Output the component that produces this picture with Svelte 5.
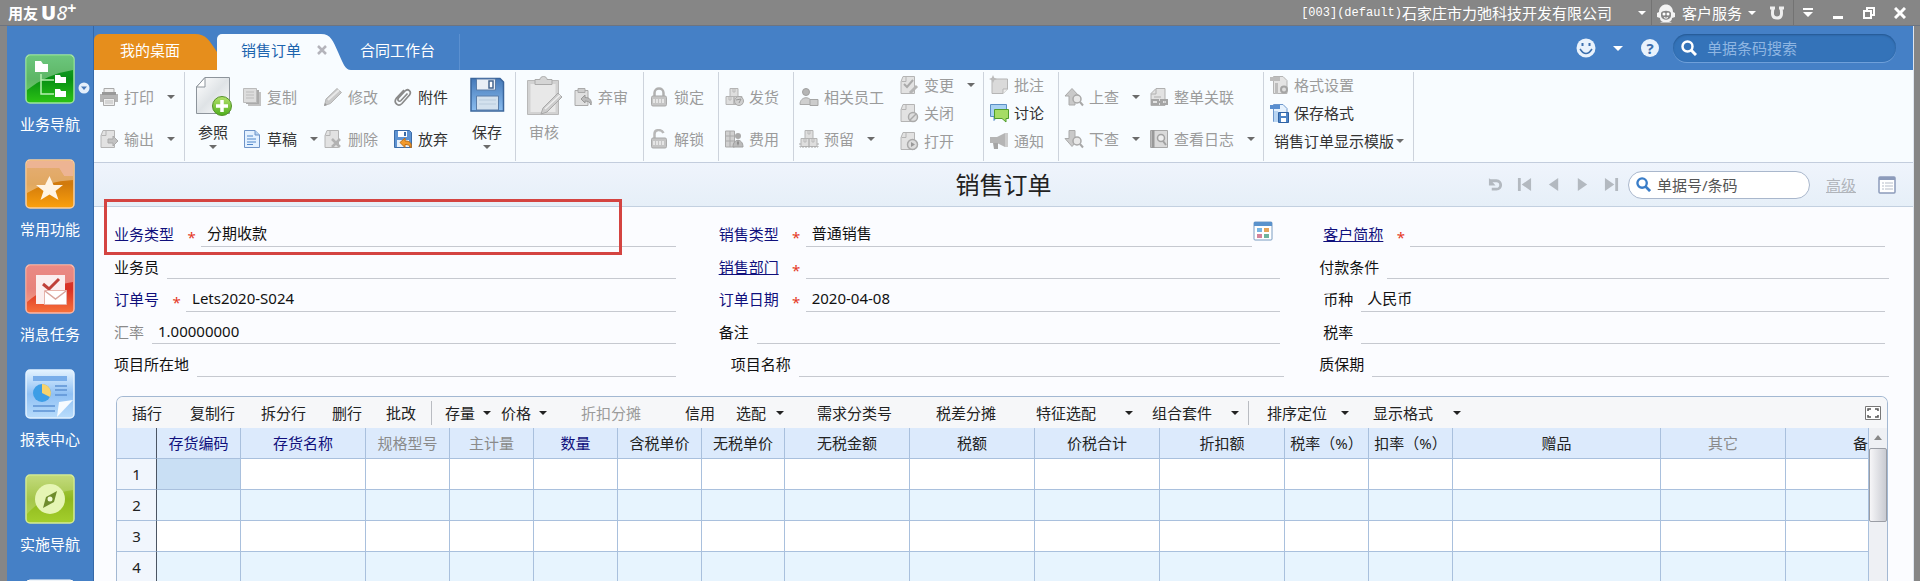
<script lang="ts">
  // small icons are drawn in a 20x20 box
  const doc = '<path d="M4 1.5H15.500V18.500H2V6.500Z" fill="#e2e2e2" stroke="#b4b4b4"/><path d="M7 1.500V6.500H2.500" fill="none" stroke="#b4b4b4"/>';
  const boxes = '<path d="M6 1.500h8v8H6zM2 9.500h8v8H2zM10 9.500h8v8h-8z" fill="#dedede" stroke="#b4b4b4"/><path d="M9 2v3h2V2M5 10v3h2v-3M13 10v3h2v-3" fill="none" stroke="#bbb"/>';
  const lockBody = '<rect x="2.500" y="9" width="15" height="10" rx="1.500" fill="#c4c4c4" stroke="#a9a9a9"/><path d="M5 12v4M8 12v4M11 12v4M14 12v4" stroke="#efefef" stroke-width="1.500"/>';

  const icons = {
    print: '<path d="M5 1.500h10V7H5z" fill="#eee" stroke="#aaa"/><path d="M1 7h18v8H1z" fill="#b5b5b5"/><path d="M3 5h14v3H3z" fill="#999"/><path d="M4.500 11.500h11v7h-11z" fill="#eee" stroke="#aaa"/><path d="M6 14h8M6 16h8" stroke="#bbb"/>',
    output: doc + '<path d="M9 10h5V7l5 5-5 5v-3H9z" fill="#c2c2c2" stroke="#aaa"/>',
    copy: '<path d="M6 5h13v14H6z" fill="#c2c2c2"/><path d="M4 3h13v14H4z" fill="#aaa"/><path d="M1.500 1.500h13v14h-13z" fill="#ddd" stroke="#bbb"/><path d="M4 5h8M4 8h8M4 11h8" stroke="#bdbdbd"/>',
    draft: '<path d="M2.500 1.500H13l4.500 4.500v12.500h-15z" fill="#e4f1ff" stroke="#6f94c8"/><path d="M13 1.500V6h4.500" fill="#b6d3f2" stroke="#6f94c8"/><path d="M5 7h6M5 10h9M5 13h9M5 15.500h6" stroke="#4f86c9"/>',
    edit: '<path d="M3 12 14 1.500 18.500 5.500 7.500 16.500 1.500 18.500Z" fill="#c9c9c9" stroke="#b5b5b5"/><path d="m5 13 11-10" stroke="#e8e8e8" stroke-width="2"/><path d="m1 19 3-1-2-2z" fill="#999"/>',
    remove: doc + '<path d="m9 10 8 8M17 10l-8 8" stroke="#b2b2b2" stroke-width="2.500"/>',
    clip: '<path d="M14.500 6.500 8 13.500c-2 2-4-.5-2.500-2.500L12 4c3-3 7 .5 4.500 4L9 16.500c-4 4-9-1-5.500-5.500L11 3" fill="none" stroke="#8a8a8a" stroke-width="1.700"/>',
    discard: '<path d="M1.500 1.500h15l2 2v15h-17z" fill="#5e93d2" stroke="#3b6ca8"/><path d="M5 2h9v6H5z" fill="#fff"/><path d="M11 3h2v4h-2z" fill="#3b6ca8"/><path d="M4 11h12v7H4z" fill="#e8f1fa"/><path d="M7 13.500 12 9v3c5 0 7 2 6 7-1.500-3-3-3.500-6-3.500v3z" fill="#f29a2c" stroke="#c06d10"/>',
    unaudit: '<path d="M2 3.500h13v15H2z" fill="#e0e0e0" stroke="#aaa"/><path d="M5 1.500h7v4H5z" fill="#ccc" stroke="#aaa"/><path d="m8 12 4-4v2.500c5 0 7 3 6 7.500-1-3-3-4-6-4V16z" fill="#bbb" stroke="#999"/>',
    lock: '<path d="M5.500 9V6c0-6 9-6 9 0v3" fill="none" stroke="#b0b0b0" stroke-width="2.500"/>' + lockBody,
    unlock: '<path d="M5.500 9V5c0-5 7-5 9-1" fill="none" stroke="#b8b8b8" stroke-width="2.500"/>' + lockBody,
    ship: boxes + '<circle cx="15" cy="14" r="4.500" fill="#d0d0d0" stroke="#a8a8a8"/><path d="m12 13 5-1-2 4" fill="none" stroke="#999"/>',
    fee: '<path d="M1.500 2h9v16h-9z" fill="#d0d0d0" stroke="#aaa"/><path d="M1 7h10M1 12h10M6 2v16" stroke="#aaa"/><circle cx="14" cy="7" r="3" fill="#aaa"/><path d="M9 18c0-9 10-9 10 0z" fill="#bbb" stroke="#a0a0a0"/><path d="m14 11-1 3 1 3 1-3z" fill="#888"/>',
    staff: '<circle cx="7" cy="5" r="3.500" fill="#b5b5b5" stroke="#a0a0a0"/><path d="M1 17.500c0-9 12-9 12 0z" fill="#cfcfcf" stroke="#aaa"/><path d="M11 12.500h8v6h-8z" fill="#ccc" stroke="#a5a5a5"/>',
    reserve: boxes + '<path d="M1 14v4h18v-4" fill="none" stroke="#aaa" stroke-dasharray="2 1"/>',
    change: doc + '<path d="m5 9 3 3 6-7" fill="none" stroke="#aaa" stroke-width="2"/><path d="m11 18 7-7" stroke="#b5b5b5" stroke-width="3"/>',
    close: doc + '<circle cx="14" cy="14" r="4.500" fill="#ddd" stroke="#aaa" stroke-width="1.500"/><path d="m11 17 6-6" stroke="#aaa" stroke-width="1.500"/>',
    open: doc + '<circle cx="13.500" cy="13.500" r="5" fill="#ddd" stroke="#aaa" stroke-width="1.500"/><path d="m12 11 4 2.500-4 2.500z" fill="#999"/>',
    note: '<path d="M3 4h15.500v10l-4.500 4.500H3z" fill="#dadada" stroke="#b5b5b5"/><path d="M18.500 14H14v4.500" fill="#eee" stroke="#b5b5b5"/><path d="m4 0 1.200 2.800L8 4 5.200 5.200 4 8 2.800 5.200 0 4l2.800-1.200z" fill="#bbb"/>',
    discuss: '<path d="M1.500 1.500h16v12H8l-3 4v-4H1.500z" fill="#a9d2f3" stroke="#5b8fc4"/><path d="M5.500 6.500h14v9H17v3.500l-4-3.500H5.500z" fill="#a6dc66" stroke="#4f9c2c"/>',
    notify: '<path d="M1 6h7l8-4v14l-8-4H1z" fill="#b5b5b5"/><path d="M4 12h5v6H5z" fill="#a5a5a5"/><path d="M17.500 2v14" stroke="#ccc" stroke-width="3"/>',
    up: '<path d="M8 1.500 15 9h-4v9H5V9H1z" fill="#c9c9c9" stroke="#aaa"/><circle cx="13" cy="12" r="4" fill="#e8e8e8" stroke="#a8a8a8" stroke-width="1.500"/><path d="m16 15 3 3.500" stroke="#a8a8a8" stroke-width="2"/>',
    down: '<path d="M5 1.500h6v8h4l-7 8-7-8h4z" fill="#c9c9c9" stroke="#aaa"/><circle cx="13" cy="12" r="4" fill="#e8e8e8" stroke="#a8a8a8" stroke-width="1.500"/><path d="m16 15 3 3.500" stroke="#a8a8a8" stroke-width="2"/>',
    relate: '<path d="M7 1.500h9v17H2V6.500z" fill="#e2e2e2" stroke="#b0b0b0"/><path d="M7 2v5H2M5 10h7" fill="none" stroke="#b0b0b0"/><path d="M3 13h6v4H3zM12 13h6v4h-6zM8 15h6" fill="none" stroke="#a5a5a5" stroke-width="2"/>',
    log: '<path d="M1.500 1.500h17v17h-17z" fill="#dadada" stroke="#a8a8a8"/><path d="M4 1v18" stroke="#999" stroke-width="3"/><circle cx="12" cy="9" r="3.500" fill="#eee" stroke="#a2a2a2" stroke-width="1.500"/><path d="m14 12 3 4" stroke="#a2a2a2" stroke-width="2"/>',
    format: '<path d="M4.500 1.500H14l4 4v13H4.500z" fill="#e4e4e4" stroke="#b4b4b4"/><path d="M1 2h10v4H1zM6 8h3v11H6z" fill="#bdbdbd"/><circle cx="15" cy="14.500" r="3" fill="#ddd" stroke="#a5a5a5" stroke-width="2"/>',
    saveFormat: '<path d="M4.500 1.500H14l4 4v13H4.500z" fill="#e5f1fd" stroke="#6c97cc"/><path d="M1 2h10v4H1z" fill="#5a8fd0"/><path d="M5 8h4v11H5z" fill="#b9d5f2"/><path d="M9.500 9.500h10v10h-10z" fill="#4d84c6" stroke="#2f62a3"/><path d="M12 10h5v3h-5zM12 15h5v4h-5z" fill="#fff"/>',
    // large ones use 40x40
    refer: '<path d="M12 1.500h24.500v36h-33V11z" fill="url(#paper)" stroke="#8d949b"/><path d="M12 1.500V11H3.500z" fill="#fff" stroke="#8d949b"/><circle cx="29" cy="30" r="9.500" fill="url(#green)" stroke="#55922a"/><path d="M29 24v12M23 30h12" stroke="#fff" stroke-width="3.500"/>',
    save: '<path d="M4 2.500h29l3.500 3.500v29H4z" fill="url(#disk)" stroke="#3a659c" stroke-width="1.500"/><path d="M9.500 3h19v11h-19z" fill="#e9eff6" stroke="#5a7da8"/><path d="M22 5h4v7h-4z" fill="#fff" stroke="#44658f" stroke-width="1.500"/><path d="M9.500 20h22v14h-22z" fill="#d3e1ee" stroke="#5a7da8"/><path d="M12 24h17M12 28h17" stroke="#b9cbdc"/>',
    audit: '<path d="M3.500 4.500h31v34h-31z" fill="#d2d2d2" stroke="#b8b8b8"/><path d="M6.500 8h25v28h-25z" fill="#e8e8e8"/><path d="M11 3.500h5c0-4 7-4 7 0h5v5H11z" fill="#d5d5d5" stroke="#aaa"/><path d="m19 32 15-15 4 4-15 15-6 2z" fill="#ccc" stroke="#a8a8a8"/><path d="m21 33 15-14" stroke="#eee" stroke-width="1.500"/>',
  };

  const ribbon = [
    [{ width: 85, items: [{ icon: "print", text: "打印", caret: true }, { icon: "output", text: "输出", caret: true }] }],
    [
      { width: 52, big: true, items: [{ icon: "refer", text: "参照", on: true, caret: true }] },
      { width: 81, items: [{ icon: "copy", text: "复制" }, { icon: "draft", text: "草稿", on: true, caret: true }] },
      { width: 70, items: [{ icon: "edit", text: "修改" }, { icon: "remove", text: "删除" }] },
      { width: 71, items: [{ icon: "clip", text: "附件", on: true }, { icon: "discard", text: "放弃", on: true }] },
      { width: 51, big: true, items: [{ icon: "save", text: "保存", on: true, caret: true }] },
    ],
    [
      { width: 52, big: true, items: [{ icon: "audit", text: "审核" }] },
      { width: 70, items: [{ icon: "unaudit", text: "弃审" }] },
    ],
    [{ width: 69, items: [{ icon: "lock", text: "锁定" }, { icon: "unlock", text: "解锁" }] }],
    [{ width: 69, items: [{ icon: "ship", text: "发货" }, { icon: "fee", text: "费用" }] }],
    [
      { width: 100, items: [{ icon: "staff", text: "相关员工" }, { icon: "reserve", text: "预留", caret: true }] },
      { width: 84, tight: true, items: [{ icon: "change", text: "变更", caret: true }, { icon: "close", text: "关闭" }, { icon: "open", text: "打开" }] },
    ],
    [{ width: 69, tight: true, items: [{ icon: "note", text: "批注" }, { icon: "discuss", text: "讨论", on: true }, { icon: "notify", text: "通知" }] }],
    [
      { width: 85, items: [{ icon: "up", text: "上查", caret: true }, { icon: "down", text: "下查", caret: true }] },
      { width: 114, items: [{ icon: "relate", text: "整单关联" }, { icon: "log", text: "查看日志", caret: true }] },
    ],
    [{ width: 144, tight: true, items: [{ icon: "format", text: "格式设置" }, { icon: "saveFormat", text: "保存格式", on: true }, { text: "销售订单显示模版", on: true, caret: true }] }],
  ];

  const modules = ["业务导航", "常用功能", "消息任务", "报表中心", "实施导航", ""];

  const fields = [
    { id: "bizType", label: "业务类型", value: "分期收款", key: true, required: true, marked: true },
    { id: "saleType", label: "销售类型", value: "普通销售", key: true, required: true, picker: true },
    { id: "customer", label: "客户简称", value: "", key: true, link: true, required: true },
    { id: "clerk", label: "业务员", value: "" },
    { id: "dept", label: "销售部门", value: "", key: true, link: true, required: true },
    { id: "terms", label: "付款条件", value: "", outset: true },
    { id: "orderNo", label: "订单号", value: "Lets2020-S024", key: true, required: true },
    { id: "orderDate", label: "订单日期", value: "2020-04-08", key: true, required: true },
    { id: "currency", label: "币种", value: "人民币" },
    { id: "rate", label: "汇率", value: "1.00000000", muted: true },
    { id: "memo", label: "备注", value: "" },
    { id: "tax", label: "税率", value: "" },
    { id: "site", label: "项目所在地", value: "" },
    { id: "project", label: "项目名称", value: "", indent: true },
    { id: "warranty", label: "质保期", value: "", outset: true },
  ];

  const commands = [
    { text: "插行", width: 58 },
    { text: "复制行", width: 71 },
    { text: "拆分行", width: 71 },
    { text: "删行", width: 54 },
    { text: "批改", width: 45 },
    { divider: true },
    { text: "存量", width: 56, gap: 8 },
    { text: "价格", width: 80, gap: 8 },
    { text: "折扣分摊", width: 104, off: true },
    { text: "信用", width: 51 },
    { text: "选配", width: 81, gap: 10 },
    { text: "需求分类号", width: 119 },
    { text: "税差分摊", width: 100 },
    { text: "特征选配", width: 116, gap: 29 },
    { text: "组合套件", width: 96, gap: 19 },
    { divider: true, wide: true },
    { text: "排序定位", width: 106, gap: 14 },
    { text: "显示格式", width: 90, gap: 20 },
  ];

  const columns = [
    { text: "存货编码", width: 84, key: true },
    { text: "存货名称", width: 125, key: true },
    { text: "规格型号", width: 84, muted: true },
    { text: "主计量", width: 84, muted: true },
    { text: "数量", width: 84, key: true },
    { text: "含税单价", width: 84 },
    { text: "无税单价", width: 83 },
    { text: "无税金额", width: 125 },
    { text: "税额", width: 125 },
    { text: "价税合计", width: 125 },
    { text: "折扣额", width: 125 },
    { text: "税率（%）", width: 84 },
    { text: "扣率（%）", width: 84 },
    { text: "赠品", width: 208 },
    { text: "其它", width: 125, muted: true },
  ];
  const rows = [1, 2, 3, 4];
</script>

{#snippet magnifier()}
  <svg class="magnifier" viewBox="0 0 16 16" aria-hidden="true">
    <circle cx="6.500" cy="6.500" r="5" fill="none" stroke="currentColor" stroke-width="2.500" />
    <path d="m10 10 5 5" stroke="currentColor" stroke-width="3" />
  </svg>
{/snippet}

<svg class="defs" aria-hidden="true">
  <defs>
    <linearGradient id="paper" x1="0" y1="0" x2="1" y2="1">
      <stop offset="0" stop-color="#fff" /><stop offset=".5" stop-color="#dfe3e6" /><stop offset="1" stop-color="#fff" />
    </linearGradient>
    <linearGradient id="green" x2="0" y2="1">
      <stop stop-color="#b4e26c" /><stop offset="1" stop-color="#4fae1d" />
    </linearGradient>
    <linearGradient id="disk" x2="0" y2="1">
      <stop stop-color="#4579b8" /><stop offset="1" stop-color="#8abdf0" />
    </linearGradient>
    <linearGradient id="nav" x2="0" y2="1">
      <stop stop-color="#1ea838" /><stop offset=".5" stop-color="#078f14" /><stop offset="1" stop-color="#2cc414" />
    </linearGradient>
    <linearGradient id="fav" x2="0" y2="1">
      <stop stop-color="#d9822c" /><stop offset=".5" stop-color="#d17a0c" /><stop offset="1" stop-color="#fba00c" />
    </linearGradient>
    <linearGradient id="msg" x2="0" y2="1">
      <stop stop-color="#dc3c34" /><stop offset=".5" stop-color="#d83024" /><stop offset="1" stop-color="#f8723a" />
    </linearGradient>
    <linearGradient id="report" x2="0" y2="1">
      <stop stop-color="#e4f3ff" /><stop offset=".5" stop-color="#8fc0f4" /><stop offset="1" stop-color="#b8dcfb" />
    </linearGradient>
    <linearGradient id="guide" x2="0" y2="1">
      <stop stop-color="#b4d25c" /><stop offset=".5" stop-color="#8fb81e" /><stop offset="1" stop-color="#a4cf2c" />
    </linearGradient>
  </defs>
</svg>

<div class="desktop">
  <header class="titlebar">
    <div class="brand">用友<b>U</b><i>8</i><sup>+</sup></div>
    <div class="account">
      <span class="mono">[003](default)</span>石家庄市力弛科技开发有限公司
    </div>
    <button class="bar-btn account-menu" aria-label="账套"><span class="caret"></span></button>
    <button class="bar-btn service">
      <svg width="20" height="20" viewBox="0 0 20 20" aria-hidden="true">
        <path d="M3 9C3-1 17-1 17 9l2 1v4l-3 1c0 4-3 3-3 3l3 1.500H4L7 18s-3 1-3-3l-3-1v-4z" fill="#f4f4f4" />
        <path d="M5 10c1-3 9-3 10 0v3c-1 5-9 5-10 0z" fill="#888" />
        <circle cx="8" cy="11" r="1.500" fill="#fff" /><circle cx="12" cy="11" r="1.500" fill="#fff" />
        <path d="M8 14.500q2 1.500 4 0" stroke="#fff" fill="none" />
      </svg>
      客户服务<span class="caret"></span>
    </button>
    <button class="bar-btn u-btn" aria-label="U">
      <svg width="16" height="14" viewBox="0 0 16 14"><path d="M1 2h5M10 2h5M4 2c-1 6-1 10 4 10s5-4 4-10" fill="none" stroke="#eee" stroke-width="3" /></svg>
    </button>
    <button class="bar-btn more" aria-label="菜单">
      <svg width="10" height="10" viewBox="0 0 10 10"><path d="M0 0h10v2H0zM0 4h10L5 9z" fill="#fff" /></svg>
    </button>
    <button class="bar-btn win" aria-label="最小化">
      <svg width="12" height="12" viewBox="0 0 12 12"><path d="M1 9h10v3H1z" fill="#fff" /></svg>
    </button>
    <button class="bar-btn win" aria-label="还原">
      <svg width="12" height="12" viewBox="0 0 12 12"><path d="M4 3V1h7v7H9M1 4h7v7H1z" fill="none" stroke="#fff" stroke-width="2" /></svg>
    </button>
    <button class="bar-btn win" aria-label="关闭">
      <svg width="12" height="12" viewBox="0 0 12 12"><path d="m1 1 10 10M11 1 1 11" stroke="#fff" stroke-width="3" /></svg>
    </button>
  </header>

  <div class="window">
    <nav class="sidebar">
      {#each modules as name, i}
        <button class="module" aria-label={name || "更多"}>
          <svg width="50" height="50" viewBox="0 0 50 50" aria-hidden="true">
            {#if i === 0}
              <rect x="1" y="1" width="48" height="48" rx="4" fill="url(#nav)" stroke="#9fe39f" stroke-width="1.500" />
              <path d="M2 2h46v14Q22 20 2 36z" fill="#fff" opacity=".35" />
              <path d="M10 7h6l2 3h5v8H10zM30 21h5l1 2h5v6H30zM30 35h5l1 2h5v6H30z" fill="#fff" />
              <path d="M16 20v20h13M16 26h13" fill="none" stroke="#b7efb0" stroke-width="1.500" />
            {:else if i === 1}
              <rect x="1" y="1" width="48" height="48" rx="4" fill="url(#fav)" stroke="#f9cfa0" stroke-width="1.500" />
              <path d="M2 2h46v15H39l-5-8H2z" fill="#edb493" />
              <path d="M2 9h32l5 8h9v4Q22 22 2 34z" fill="#fff" opacity=".35" />
              <path d="m24.500 17 4 9H38l-7.500 6 3 9-9-5.500-9 5.500 3-9-7.500-6h9z" fill="#fff4e4" />
            {:else if i === 2}
              <rect x="1" y="1" width="48" height="48" rx="4" fill="url(#msg)" stroke="#fbb7a6" stroke-width="1.500" />
              <path d="M2 2h46v16Q20 22 2 38z" fill="#fff" opacity=".4" />
              <path d="M11 11h29v29H11z" fill="#fbeeee" />
              <path d="m18 20 6 5 10-10" fill="none" stroke="#bf4038" stroke-width="3" />
              <path d="M19.500 26.500h22v14h-22z" fill="#fff" stroke="#e7b4ab" />
              <path d="m20 27 10.500 8L41 27" fill="none" stroke="#d9a49c" stroke-width="1.500" />
            {:else if i === 3}
              <rect x="1" y="1" width="48" height="48" rx="4" fill="url(#report)" stroke="#e3f2ff" stroke-width="1.500" />
              <path d="M8 7h34v5H8z" fill="#79aeea" />
              <circle cx="17" cy="24" r="9" fill="#3d9ee6" />
              <path d="M17 24V15a9 9 0 0 1 8 13z" fill="#f8d36c" />
              <path d="M30 17h12M30 21h12M30 26h12M8 37h22M8 42h22" stroke="#5d92d4" stroke-width="1.500" />
              <path d="m32 48 2-15 14-2z" fill="#f6fbff" />
            {:else if i === 4}
              <rect x="1" y="1" width="48" height="48" rx="4" fill="url(#guide)" stroke="#d5eb95" stroke-width="1.500" />
              <path d="M2 2h46v14Q20 20 2 40z" fill="#fff" opacity=".2" />
              <circle cx="25" cy="25" r="15" fill="#e6f5b4" />
              <path d="m32 17-3 11-11 6 3-11z" fill="#6f8c2c" />
              <circle cx="25" cy="25" r="2.500" fill="#f2fbd6" />
            {:else}
              <rect x="1" y="1" width="48" height="48" rx="4" fill="#dfe8f2" stroke="#fff" />
            {/if}
          </svg>
          <span>{name}</span>
          {#if i === 0}
            <svg class="expand" viewBox="0 0 12 12" aria-hidden="true">
              <circle cx="6" cy="6" r="5.500" fill="#e4effb" /><path d="M3 4.500h6L6 8z" fill="#4678b8" />
            </svg>
          {/if}
        </button>
      {/each}
    </nav>

    <main>
      <div class="tabs">
        <button class="tab home">我的桌面</button>
        <svg class="home-edge" viewBox="0 0 22 36" aria-hidden="true"><path d="M0 0C11 0 14 6 22 18V36H0Z" /></svg>
        <div class="tab current">
          <button>销售订单</button>
          <button class="tab-close" aria-label="关闭标签">
            <svg width="10" height="10" viewBox="0 0 10 10"><path d="m1 1 8 8M9 1 1 9" stroke="#b4b4bb" stroke-width="2.500" /></svg>
          </button>
        </div>
        <svg class="current-edge" viewBox="0 0 30 36" aria-hidden="true"><path d="M0 0C10 0 12 7 17 18S24 36 30 36H0Z" /></svg>
        <button class="tab plain">合同工作台</button>
        <div class="tools">
          <button class="tool" aria-label="表情">
            <svg width="20" height="20" viewBox="0 0 20 20">
              <circle cx="10" cy="10" r="9.500" fill="#e9f2fc" />
              <path d="M6.500 5v3M13.500 5v3" stroke="#3c6fad" stroke-width="2" />
              <path d="M4 11q6 9 12 0" fill="none" stroke="#3c6fad" stroke-width="1.500" />
            </svg>
          </button>
          <button class="tool mood" aria-label="更多"><span class="caret wide"></span></button>
          <button class="tool help" aria-label="帮助">?</button>
          <label class="top-search">
            {@render magnifier()}
            <input type="text" placeholder="单据条码搜索" aria-label="单据条码搜索" />
          </label>
        </div>
      </div>

      <div class="ribbon">
        {#each ribbon as group}
          <div class="group">
            {#each group as col}
              <div class="col" class:big={col.big} class:tight={col.tight} style="width: {col.width}px">
                {#each col.items as item}
                  <button class="action" class:on={item.on} class:bare={!item.icon}>
                    {#if item.icon}
                      <svg viewBox={col.big ? "0 0 40 40" : "0 0 20 20"} aria-hidden="true">{@html icons[item.icon]}</svg>
                    {/if}
                    <span>{item.text}</span>
                    {#if item.caret}<span class="caret"></span>{/if}
                  </button>
                {/each}
              </div>
            {/each}
          </div>
        {/each}
      </div>

      <div class="heading">
        <h1>销售订单</h1>
        <div class="pager">
          <button aria-label="刷新"><svg viewBox="0 0 16 16"><path d="M2 4h7c6 0 6 9 0 9H4" fill="none" stroke="currentColor" stroke-width="3" /><path d="M1 1v8h7z" fill="currentColor" /></svg></button>
          <button aria-label="首张"><svg viewBox="0 0 16 16"><path d="M1 1h3v14H1zM15 1v14L5 8z" fill="currentColor" /></svg></button>
          <button aria-label="上张"><svg viewBox="0 0 16 16"><path d="M13 1v14L3 8z" fill="currentColor" /></svg></button>
          <button aria-label="下张"><svg viewBox="0 0 16 16"><path d="M3 1v14l10-7z" fill="currentColor" /></svg></button>
          <button aria-label="末张"><svg viewBox="0 0 16 16"><path d="M12 1h3v14h-3zM1 1v14l10-7z" fill="currentColor" /></svg></button>
          <label class="doc-search">
            {@render magnifier()}
            <input type="text" placeholder="单据号/条码" aria-label="单据号/条码" />
          </label>
          <a href="#advanced">高级</a>
          <button class="layout" aria-label="布局">
            <svg viewBox="0 0 18 18"><rect x="1" y="1" width="16" height="16" rx="1" fill="#fff" stroke="#8c9bbb" stroke-width="1.500" /><path d="M1 2.500h16" stroke="#8c9bbb" stroke-width="3" /><path d="M4 7h2M4 10h2M4 13h2M7 7h8M7 10h8M7 13h8" stroke="#b6bdc9" /></svg>
          </button>
        </div>
      </div>

      <form class="form">
        {#each fields as field}
          <div class="field" class:outset={field.outset} class:indent={field.indent}>
            <label for={field.id} class:key={field.key} class:link={field.link} class:muted={field.muted}>{field.label}</label>
            {#if field.required}<span class="star">*</span>{/if}
            <input id={field.id} type="text" value={field.value} />
            {#if field.picker}
              <button type="button" class="picker" aria-label="参照">
                <svg width="20" height="20" viewBox="0 0 20 20">
                  <rect x="1" y="1" width="18" height="18" rx="1" fill="#fff" stroke="#7b9cc2" />
                  <path d="M1 1h18v4H1z" fill="#5a92cc" />
                  <path d="M4 7h5v4H4z" fill="#78b6e4" /><path d="M11 7h5v4h-5z" fill="#e5a55b" />
                  <path d="M4 13h5v4H4z" fill="#d4839b" /><path d="M11 13h5v4h-5z" fill="#6fb49c" />
                </svg>
              </button>
            {/if}
            {#if field.marked}<div class="mark"></div>{/if}
          </div>
        {/each}
      </form>

      <section class="detail">
        <div class="commands">
          {#each commands as cmd}
            {#if cmd.divider}
              <span class="divider" class:wide={cmd.wide}></span>
            {:else}
              <button class:off={cmd.off} style="width: {cmd.width}px">
                {cmd.text}{#if cmd.gap}<span class="caret" style="margin-left: {cmd.gap}px"></span>{/if}
              </button>
            {/if}
          {/each}
          <button class="fullscreen" aria-label="全屏">
            <svg width="16" height="14" viewBox="0 0 16 14"><path d="M.5.500h15v13H.5z" fill="#fff" stroke="#777" /><path d="M3 5V3h3M10 3h3v2M3 9v2h3M10 11h3V9" fill="none" stroke="#555" stroke-width="1.500" /></svg>
          </button>
        </div>
        <div class="sheet">
          <table>
            <colgroup>
              <col style="width: 40px" />
              {#each columns as column}<col style="width: {column.width}px" />{/each}
              <col />
            </colgroup>
            <thead>
              <tr>
                <th></th>
                {#each columns as column}
                  <th class:key={column.key} class:muted={column.muted}>{column.text}</th>
                {/each}
                <th class="last">备</th>
              </tr>
            </thead>
            <tbody>
              {#each rows as row}
                <tr>
                  <th>{row}</th>
                  {#each columns as _, c}<td class:selected={row === 1 && c === 0}></td>{/each}
                  <td></td>
                </tr>
              {/each}
            </tbody>
          </table>
          <div class="scroll">
            <svg width="8" height="5" viewBox="0 0 8 5" aria-hidden="true"><path d="M0 5h8L4 0z" fill="#888" /></svg>
            <div class="thumb"></div>
          </div>
        </div>
      </section>
    </main>
  </div>
</div>

<style>
  :global(body) {
    background: #868686;
    overflow: hidden;
  }

  .desktop {
    height: 100vh;
    display: flex;
    flex-direction: column;
    font-family: "Noto Sans", "Noto Sans CJK SC", sans-serif;
    font-size: 15px;
    line-height: 20px;
    color: #222;
  }

  .defs {
    position: absolute;
    width: 0;
    height: 0;
  }

  button {
    font: inherit;
    color: inherit;
    background: none;
    border: 0;
    padding: 0;
    white-space: nowrap;
    cursor: pointer;
  }

  input {
    font: inherit;
    color: inherit;
    background: none;
    border: 0;
    outline: 0;
    padding: 0;
    min-width: 0;
  }

  svg {
    display: block;
    flex: none;
  }

  .caret {
    flex: none;
    width: 0;
    border: 4px solid transparent;
    border-top: 4px solid currentColor;
    border-bottom: 0;
  }

  .caret.wide {
    border-width: 5px 5px 0;
  }

  /* title bar */
  .titlebar {
    flex: none;
    display: flex;
    align-items: center;
    height: 26px;
    padding: 0 5px 0 8px;
    box-sizing: border-box;
    color: #fff;
    border-bottom: 1px solid #6d7480;
  }

  .brand {
    display: flex;
    align-items: center;
    font-weight: bold;
    flex: 1;
  }

  .brand b {
    margin-left: 3px;
    font-size: 20px;
    font-weight: 900;
  }

  .brand i {
    font-size: 20px;
    font-weight: normal;
  }

  .brand sup {
    font-size: 16px;
    line-height: 10px;
    padding-bottom: 10px;
  }

  .account {
    display: flex;
    align-items: center;
  }

  .mono {
    font-family: "Liberation Mono", monospace;
    font-size: 12px;
  }

  .bar-btn {
    display: flex;
    align-items: center;
    justify-content: center;
    height: 25px;
  }

  .account-menu {
    width: 40px;
    padding-left: 20px;
    border-right: 1px solid #737373;
  }

  .service {
    width: 108px;
    gap: 6px;
  }

  .u-btn {
    width: 34px;
    border-right: 1px solid #737373;
  }

  .more {
    width: 28px;
  }

  .win {
    width: 31px;
  }

  .window {
    flex: 1;
    min-height: 0;
    display: flex;
    margin: 0 6px 0 7px;
    border-right: 1px solid #dfe6f0;
  }

  /* module bar */
  .sidebar {
    flex: none;
    width: 87px;
    padding-top: 28px;
    box-sizing: border-box;
    background: #4580c6;
    border-right: 1px solid #3568a8;
    overflow: hidden;
  }

  .module {
    position: relative;
    display: flex;
    flex-direction: column;
    align-items: center;
    gap: 10px;
    width: 100%;
    height: 105px;
    color: #fff;
  }

  .expand {
    position: absolute;
    right: 3px;
    top: 28px;
    width: 12px;
    height: 12px;
  }

  main {
    flex: 1;
    min-width: 0;
    display: flex;
    flex-direction: column;
    background: #fbfcff;
  }

  /* tabs */
  .tabs {
    flex: none;
    display: flex;
    height: 36px;
    padding-top: 8px;
    background: #4580c6;
    color: #fff;
  }

  .tab {
    height: 36px;
    padding-bottom: 4px;
    box-sizing: border-box;
  }

  .home {
    width: 101px;
    padding-left: 26px;
    text-align: left;
    background: #e68e1c;
    border-radius: 6px 0 0 0;
  }

  .home-edge {
    width: 22px;
    height: 36px;
    fill: #e68e1c;
  }

  .current {
    display: flex;
    align-items: center;
    gap: 16px;
    width: 104px;
    padding-left: 24px;
    background: #f8fcff;
    color: #1d64ae;
    border-radius: 5px 0 0 0;
    z-index: 1;
  }

  .current button {
    flex: none;
  }

  .current-edge {
    width: 30px;
    height: 36px;
    fill: #f8fcff;
  }

  .plain {
    padding-left: 9px;
    padding-right: 24px;
    border-right: 1px solid #5b90d0;
  }

  .tools {
    flex: 1;
    display: flex;
    align-items: center;
    justify-content: flex-end;
    height: 28px;
    padding-right: 17px;
  }

  .mood {
    display: flex;
    padding: 8px 14px 8px 17px;
  }

  .help {
    width: 18px;
    height: 18px;
    border-radius: 50%;
    background: #e9f2fc;
    color: #3c6fad;
    font-weight: bold;
    line-height: 18px;
    margin: 0 14px 0 4px;
  }

  .magnifier {
    width: 16px;
    height: 16px;
  }

  .top-search {
    display: flex;
    align-items: center;
    gap: 10px;
    width: 223px;
    height: 28px;
    padding: 0 8px;
    box-sizing: border-box;
    border-radius: 14px;
    background: #3473b9;
    box-shadow: inset 0 1px 2px #24568f, 0 1px 0 #6fa0da;
  }

  .top-search input {
    flex: 1;
  }

  .top-search input::placeholder {
    color: #8fb6e2;
    opacity: 1;
  }

  /* ribbon */
  .ribbon {
    flex: none;
    display: flex;
    height: 92px;
    background: #f8fcff;
    border-bottom: 1px solid #c3cddd;
  }

  .group {
    display: flex;
    padding-left: 5px;
    margin: 2px 0 1px;
    border-right: 1px solid #cdd3dc;
  }

  .col {
    padding-top: 4px;
  }

  .col.tight {
    padding-top: 0;
    margin-top: -1px;
  }

  .action {
    display: flex;
    align-items: center;
    gap: 5px;
    height: 42px;
    color: #9b9b9b;
  }

  .action.on {
    color: #333;
  }

  .action svg {
    width: 20px;
    height: 20px;
  }

  .action .caret {
    margin-left: 8px;
    color: #6b6b6b;
  }

  .tight .action {
    height: 28px;
  }

  .bare {
    padding-left: 5px;
  }

  .bare .caret {
    margin-left: -3px;
  }

  .big .action {
    flex-direction: column;
    gap: 6px;
    width: 46px;
    height: auto;
  }

  .big .action svg {
    width: 40px;
    height: 40px;
  }

  .big .caret {
    margin: -3px 0 0;
  }

  /* heading strip */
  .heading {
    flex: none;
    position: relative;
    display: flex;
    align-items: center;
    justify-content: center;
    height: 43px;
    background: linear-gradient(#eff4fc, #e6eff8);
    border-bottom: 1px solid #c3d0e0;
  }

  h1 {
    margin: 0;
    font-size: 24px;
    line-height: 32px;
    font-weight: normal;
  }

  .pager {
    position: absolute;
    right: 17px;
    display: flex;
    align-items: center;
    gap: 14px;
    color: #b3b9c0;
  }

  .pager svg {
    width: 15px;
    height: 15px;
  }

  .doc-search {
    display: flex;
    align-items: center;
    gap: 6px;
    width: 182px;
    height: 28px;
    padding: 0 7px;
    margin-left: -5px;
    box-sizing: border-box;
    background: #fff;
    border: 1px solid #a9b7cc;
    border-radius: 14px;
    color: #3a7dc8;
  }

  .doc-search input {
    flex: 1;
  }

  .doc-search input::placeholder {
    color: #555;
    opacity: 1;
  }

  .pager a {
    color: #b0b4ba;
    margin: 0 8px 0 2px;
  }

  .pager .layout svg {
    width: 18px;
    height: 18px;
  }

  /* document head */
  .form {
    flex: none;
    display: grid;
    grid-template-columns: repeat(3, 1fr);
    grid-template-rows: 33px 32px 33px 32px 33px;
    column-gap: 43px;
    padding: 7px 28px 19px 20px;
    color: #111;
  }

  .field {
    position: relative;
    display: flex;
  }

  .field label {
    padding-top: 10px;
    margin-right: 8px;
  }

  .key {
    color: #10107c;
  }

  .link {
    text-decoration: underline;
  }

  .muted {
    color: #8a8a8a;
  }

  .star {
    width: 19px;
    padding-top: 13px;
    box-sizing: border-box;
    text-align: center;
    color: #e5391f;
    font-size: 15px;
  }

  .field input {
    flex: 1;
    padding: 6px 6px 0;
    border-bottom: 1px solid #c6c9d0;
  }

  .outset {
    margin: 0 -4px;
  }

  .indent {
    margin: 0 -4px 0 12px;
  }

  .picker {
    margin: 0 7px 0 1px;
  }

  /* highlighted field */
  .mark {
    position: absolute;
    inset: -15px 54px -8px -10px;
    border: 3px solid #d44441;
    pointer-events: none;
  }

  /* detail grid */
  .detail {
    flex: 1;
    min-height: 0;
    display: flex;
    flex-direction: column;
    margin: 0 25px 0 22px;
    border: 1px solid #a3b8d2;
    border-bottom: 0;
    border-radius: 7px 7px 0 0;
    overflow: hidden;
  }

  .commands {
    flex: none;
    display: flex;
    align-items: center;
    height: 31px;
    padding-left: 15px;
    background: #f6f7f9;
  }

  .commands button {
    display: flex;
    align-items: center;
    flex: none;
  }

  .commands .off {
    color: #9b9b9b;
  }

  .commands .divider {
    width: 1px;
    height: 24px;
    margin-right: 13px;
    background: #b9bcc2;
  }

  .commands .divider.wide {
    margin-right: 18px;
  }

  .commands .fullscreen {
    margin: 0 6px 0 auto;
  }

  .sheet {
    flex: 1;
    min-height: 0;
    display: flex;
  }

  table {
    flex: 1;
    width: 0;
    height: 155px;
    table-layout: fixed;
    border-collapse: separate;
    border-spacing: 0;
  }

  th,
  td {
    height: 31px;
    padding: 0;
    box-sizing: border-box;
    font-weight: normal;
    white-space: nowrap;
    border-right: 1px solid #a9c0dd;
    border-bottom: 1px solid #a9c0dd;
  }

  thead th {
    background: #dceafc;
  }

  .last {
    text-align: right;
  }

  tr > :first-child {
    border-right-color: #4b5563;
  }

  tbody th {
    background: #f1f6fd;
  }

  td {
    background: #fff;
  }

  tr:nth-child(even) td {
    background: #e7f4fe;
  }

  td.selected {
    background: #c9dff4;
  }

  .scroll {
    flex: none;
    display: flex;
    flex-direction: column;
    align-items: center;
    gap: 8px;
    width: 18px;
    padding-top: 7px;
    background: #eef0f4;
  }

  .thumb {
    width: 16px;
    height: 72px;
    border: 1px solid #9a9da5;
    border-radius: 2px;
    background: linear-gradient(90deg, #f6f6f8, #c9cbd2);
  }
</style>
